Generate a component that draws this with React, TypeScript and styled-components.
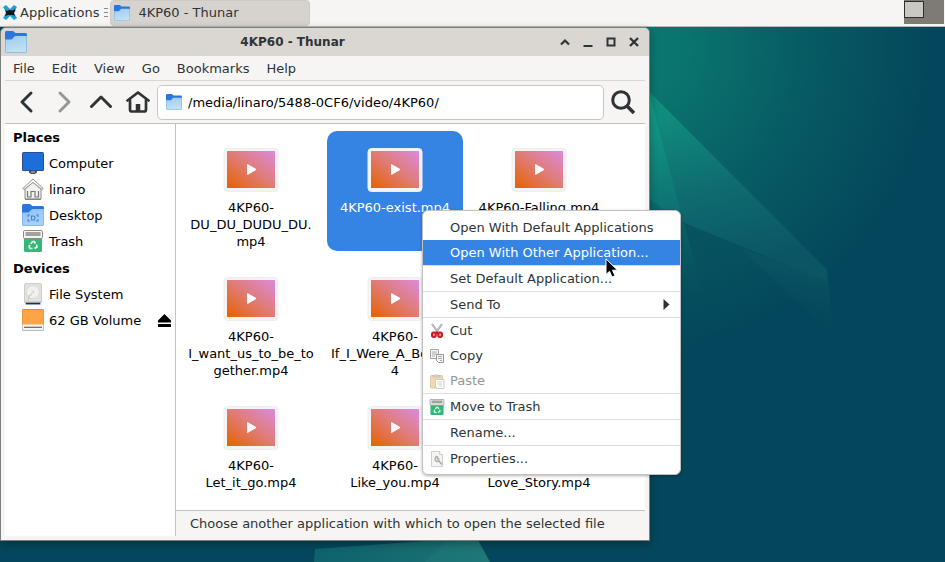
import React, { useId } from "react";
import styled, { createGlobalStyle, css } from "styled-components";

const GlobalStyle = createGlobalStyle`
  * { box-sizing: border-box; }
  html, body { margin: 0; padding: 0; }
  body, button, input {
    font-family: "DejaVu Sans", Verdana, sans-serif;
    font-size: 13px;
    line-height: 17px;
    color: #2e3436;
  }
  svg { display: block; flex: none; }
`;

const Screen = styled.div`
  position: relative;
  min-height: 100vh;
  display: flex;
  flex-direction: column;
  overflow: hidden;
`;

const PlainButton = styled.button`
  display: flex;
  align-items: center;
  justify-content: center;
  margin: 0;
  padding: 0;
  border: 0;
  background: none;
  text-align: left;
`;

const Panel = styled.header`
  display: flex;
  height: 27px;
  background: #f6f5f4;
  border-bottom: 1px solid #b4bab8;
`;

const ApplicationsButton = styled(PlainButton)`
  gap: 3px;
  padding: 0 5px 2px 3px;
`;

const PanelHandle = styled.div`
  display: flex;
  flex-direction: column;
  gap: 3px;
  padding: 8px 2px 0 0;
  i { width: 4px; height: 1px; background: #8c8c8a; }
`;

const TaskButton = styled(PlainButton)`
  flex: 0 1 200px;
  justify-content: flex-start;
  gap: 8px;
  padding: 0 3px 1px;
  background: #d6d2ce;
  border: 1px solid #cfcac5;
  border-radius: 4px;
`;

const Pager = styled.div`
  display: flex;
  width: 40px;
  height: 24px;
  margin: 0 1px 0 auto;
  background: #7e7a75;
`;

const PagerWindow = styled.div`
  width: 20px;
  height: 17px;
  margin-top: 1px;
  background: #c9c8c3;
  border: 1px solid #2e2e2c;
`;

const Desktop = styled.main`
  position: relative;
  flex: 1;
  display: flex;
  padding: 0 295px 21px 0;
  background: #04475c;
`;

const Wallpaper = styled.svg`
  position: absolute;
  inset: 0;
  width: 100%;
  height: 100%;
`;

const Window = styled.section`
  position: relative;
  flex: 1;
  min-width: 0;
  display: flex;
  flex-direction: column;
  background: #f6f5f4;
  border: 1px solid #7d7f7c;
  border-radius: 6px 6px 0 0;
  box-shadow: 0 3px 8px rgba(0, 0, 0, 0.3);
  overflow: hidden;
`;

const TitleBar = styled.div`
  display: flex;
  align-items: center;
  height: 28px;
  padding: 0 8px 0 4px;
  background: #dad6d2;
  h1 {
    flex: 1;
    margin: 0;
    font-size: 12px;
    line-height: 17px;
    text-align: center;
  }
`;

const WindowButtons = styled.div`
  display: flex;
  gap: 9px;
`;

const WindowButton = styled(PlainButton)`
  width: 14px;
  height: 20px;
`;

const MenuBar = styled.nav`
  display: flex;
  gap: 1px;
  height: 25px;
  margin: 0 4px;
  border-bottom: 1px solid #d9d6d3;
`;

const MenuBarItem = styled(PlainButton)`
  padding: 0 8px;
`;

const Toolbar = styled.div`
  display: flex;
  align-items: center;
  height: 42px;
  margin: 0 4px;
  padding: 0 4px 0 3px;
`;

const ToolButton = styled(PlainButton)`
  width: 37px;
  height: 36px;
`;

const PathField = styled.label`
  flex: 1;
  display: flex;
  align-items: center;
  gap: 6px;
  height: 35px;
  margin-left: 1px;
  padding: 0 8px;
  background: #fff;
  border: 1px solid #c9c4bf;
  border-radius: 5px;
  input {
    flex: 1;
    min-width: 0;
    padding: 0;
    border: 0;
    outline: 0;
    background: none;
    color: #000;
  }
`;

const Body = styled.div`
  flex: 1;
  display: flex;
  margin: 0 4px 4px;
  border-top: 1px solid #c6c1bc;
`;

const Sidebar = styled.aside`
  width: 171px;
  background: #fff;
  border-right: 1px solid #c6c1bc;
  color: #000;
  h2 {
    margin: 0;
    padding: 5px 8px 4px;
    font-size: 13px;
    line-height: 17px;
  }
  ul { margin: 0 0 1px; padding: 0; list-style: none; }
`;

const Place = styled.li`
  display: flex;
  align-items: center;
  height: 26px;
  padding: 0 4px 0 17px;
  a {
    flex: 1;
    display: flex;
    align-items: center;
    gap: 5px;
    color: #000;
    text-decoration: none;
  }
`;

const Content = styled.div`
  flex: 1;
  min-width: 0;
  display: flex;
  flex-direction: column;
`;

const FileGrid = styled.div`
  flex: 1;
  display: grid;
  grid-template-columns: repeat(auto-fill, 136px);
  grid-auto-rows: 120px;
  align-content: start;
  gap: 9px 8px;
  padding: 7px 7px 0;
  background: #fff;
`;

const FileCell = styled.button<{ $selected?: boolean }>`
  display: flex;
  flex-direction: column;
  align-items: center;
  gap: 7px;
  margin: 0;
  padding: 17px 0 0;
  border: 0;
  border-radius: 10px;
  background: ${(p) => (p.$selected ? "#3584e4" : "transparent")};
  color: ${(p) => (p.$selected ? "#fff" : "#000")};
  white-space: pre;
`;

const StatusBar = styled.footer`
  height: 26px;
  padding: 4px 14px;
  border-top: 1px solid #c6c1bc;
`;

const ContextMenu = styled.div`
  position: absolute;
  top: 210px;
  left: 422px;
  width: 259px;
  padding: 4px 0 3px;
  background: #fff;
  border: 1px solid #c4c2c0;
  border-radius: 6px;
  box-shadow: 0 1px 3px rgba(0, 0, 0, 0.3);
  hr { height: 1px; margin: 0; border: 0; background: #dfdedc; }
`;

const MenuItem = styled.button<{ $active?: boolean }>`
  display: flex;
  align-items: center;
  width: 100%;
  height: 25px;
  margin: 0;
  padding: 0 8px 0 6px;
  border: 0;
  background: none;
  text-align: left;
  span { flex: 1; }
  &:disabled { color: #949796; }
  ${(p) => p.$active && css`background: #3584e4; color: #fff;`}
`;

const MenuIcon = styled.div`
  width: 21px;
`;

const Pointer = styled.svg`
  position: absolute;
  top: 258px;
  left: 605px;
`;

const FolderIcon = ({ size, desktop }: { size: number; desktop?: boolean }) => {
  const id = useId();
  return (
    <svg width={size} height={size} viewBox="0 0 22 22">
      <defs>
        <linearGradient id={id} x1="0" y1="0" x2="0.3" y2="1">
          <stop offset="0" stopColor={desktop ? "#8fc2f8" : "#9bc9f3"} />
          <stop offset="1" stopColor={desktop ? "#a9d2fb" : "#c3e2f1"} />
        </linearGradient>
      </defs>
      <path d="M0 1.500Q0 0 1.500 0H8l2.500 2H20.500Q22 2 22 3.500V12H0z" fill="#2a76dc" />
      <path d="M0 8.500H6.500L10 5H22V20Q22 22 20 22H2Q0 22 0 20z" fill={`url(#${id})`} />
      <path d="M.4 9V20Q.4 21.600 2 21.600H20Q21.600 21.600 21.600 20V5.400" fill="none" stroke="#77addf" strokeWidth=".8" />
      {desktop && (
        <g fill="none" stroke="#3f86d8" strokeWidth="1.100">
          <path d="M8 11H6v2M6 15v2h2M14 11h2v2M16 15v2h-2" />
          <path d="M9.500 12H11Q13 12 13 14T11 16H9.500z" />
        </g>
      )}
    </svg>
  );
};

const XfceIcon = () => (
  <svg width="14" height="15" viewBox="0 0 14 15">
    <path d="M0 2L3 0 7 4 11 0 14 2 10.500 7.500 14 13 11 15 7 11 3 15 0 13 3.500 7.500z" fill="#1d9fd8" />
    <path d="M2 5l2 1 2-1 4 .5L12 4l.5 1.500L11 8l1 3-2-1H5L2 11l1-3z" fill="#10181b" />
  </svg>
);

const HouseIcon = () => (
  <svg width="24" height="22" viewBox="0 0 24 22" fill="none" stroke="#2e3436" strokeWidth="2.700" strokeLinejoin="round" strokeLinecap="round">
    <path d="M1.500 9.500L12 1.500 22.500 9.500" />
    <path d="M4 9V18.500Q4 20.500 6 20.500H18Q20 20.500 20 18.500V9" />
    <path d="M12 20V13" strokeWidth="4.500" strokeLinecap="butt" />
  </svg>
);

const Chevron = ({ d, color = "#2e3436" }: { d: string; color?: string }) => (
  <svg width="22" height="22" viewBox="0 0 22 22" fill="none" stroke={color} strokeWidth="2.900" strokeLinecap="round" strokeLinejoin="round">
    <path d={d} />
  </svg>
);

const ComputerIcon = () => (
  <svg width="22" height="22" viewBox="0 0 22 22">
    <path d="M7 18h8v2.500l-2 1.500H9l-2-1.500z" fill="#4a4d5c" />
    <rect width="22" height="19" rx="1.500" fill="#2b4f8e" />
    <rect x="1" y="1" width="20" height="17" rx=".5" fill="#1c6fdb" />
    <path d="M9 20h4" stroke="#c9ccd4" />
  </svg>
);

const HomePlaceIcon = () => (
  <svg width="22" height="22" viewBox="0 0 22 22">
    <path d="M3 11L11 4l8 7v10H3z" fill="#f1f1ef" stroke="#8a8a87" />
    <path d="M.7 10.500L11 1 21.300 10.500 20 11.500 11 4.500 2 11.500z" fill="#fafaf9" stroke="#8a8a87" strokeWidth=".9" />
    <path d="M5.500 13v6h3.500v-5.500h4V19h3.500v-6" fill="none" stroke="#777774" strokeWidth="1.200" />
    <path d="M3 21.300h16" stroke="#777774" />
  </svg>
);

const TrashIcon = ({ size }: { size: number }) => (
  <svg width={size} height={size} viewBox="0 0 22 22">
    <path d="M2 6h18v14.500q0 1.500-1.500 1.500h-15Q2 22 2 20.500z" fill="#32b877" />
    <rect x="1.500" y=".5" width="19" height="8" rx="1.200" fill="#f6f5f4" stroke="#8c8b88" />
    <rect x="3.500" y="2" width="15" height="4" fill="#a3a19d" />
    <g fill="none" stroke="#eafff4" strokeWidth="1.700">
      <path d="M8.700 14L10.500 11.500h1.500l1.500 2" />
      <path d="M14.500 14.500L15 17l-2.500 1.500" />
      <path d="M10.500 18.500H8L7 16.500l1-1.500" />
    </g>
  </svg>
);

const DiskIcon = () => (
  <svg width="22" height="22" viewBox="0 0 22 22">
    <rect x="2.500" y=".5" width="17" height="20" rx="1.500" fill="#e3e2df" stroke="#cfcdca" />
    <path d="M3 18.500h16v2q0 1.500-1.500 1.500h-13Q3 22 3 20.500z" fill="#b9c0ca" />
    <path d="M4 20.500h14" stroke="#252c3c" strokeWidth="1.400" />
    <circle cx="11" cy="9" r="6.500" fill="#f2f1ef" stroke="#d3d2cf" strokeWidth=".7" />
    <circle cx="11" cy="9" r="1.700" fill="#dddcd9" />
    <path d="M6 17l1-4 3-2" fill="none" stroke="#cbc9c6" strokeWidth="1.200" />
  </svg>
);

const VolumeIcon = () => (
  <svg width="22" height="22" viewBox="0 0 22 22">
    <rect y="12" width="22" height="10" rx="1.500" fill="#bdbab7" />
    <path d="M.8 15h20.400v5q0 1-1 1H1.800q-1 0-1-1z" fill="#f6f5f4" />
    <path d="M0 1.500Q0 0 1.500 0h19Q22 0 22 1.500V15.500H0z" fill="#ffa348" />
    <path d="M0 1.500Q0 0 1.500 0h19Q22 0 22 1.500V15H21.500V1H.5V15H0z" fill="#dd8b3b" />
    <path d="M2 18.300h18" stroke="#55565c" strokeWidth="1.100" />
  </svg>
);

const EjectIcon = () => (
  <svg width="13" height="13" viewBox="0 0 13 13">
    <path d="M6.500 0L13 6.500V8.500H0V6.500zM0 10h13v3H0z" fill="#000" />
  </svg>
);

const VideoIcon = () => {
  const id = useId();
  return (
    <svg width="56" height="44" viewBox="0 0 56 44">
      <defs>
        <linearGradient id={id} x1="0" y1="1" x2="1" y2="0">
          <stop offset="0" stopColor="#e66100" />
          <stop offset=".5" stopColor="#e07b73" />
          <stop offset="1" stopColor="#dc8add" />
        </linearGradient>
      </defs>
      <rect x="1" y=".5" width="54" height="43" rx="3.500" fill="#f6f4f3" stroke="#efedeb" />
      <rect x="4" y="3" width="48" height="37" rx=".6" fill={`url(#${id})`} />
      <path d="M24.500 16.500L33 21.500 24.500 26.500z" fill="#fff" stroke="#fff" strokeLinejoin="round" />
    </svg>
  );
};

const ScissorsIcon = () => (
  <svg width="16" height="16" viewBox="0 0 16 16">
    <path d="M3 1l6.500 9M13 1L6.500 10" stroke="#969b98" strokeWidth="2" />
    <path d="M3 1l6 8M13 1L7 9" stroke="#d7dad8" strokeWidth=".8" />
    <rect x="3" y="9.500" width="3.800" height="4.500" rx="1.700" fill="#e8a0a4" stroke="#cb1a28" strokeWidth="2" />
    <rect x="9.200" y="9.500" width="3.800" height="4.500" rx="1.700" fill="#e8a0a4" stroke="#cb1a28" strokeWidth="2" />
    <path d="M7 11l1-2 1.500 2" fill="none" stroke="#cb1a28" strokeWidth="1.500" />
  </svg>
);

const CopyIcon = () => (
  <svg width="16" height="16" viewBox="0 0 16 16">
    <path d="M1.500 1.500h8v9h-8z" fill="#f7f7f6" stroke="#a1a19e" />
    <path d="M3 4h5M3 6h5M3 8h3" stroke="#aaa" />
    <path d="M7.500 6.500h7v8h-5l-2-2z" fill="#f7f7f6" stroke="#969693" />
    <path d="M9 8.500h4M9 10.500h4M11 12.500h2" stroke="#aaa" />
  </svg>
);

const PasteIcon = () => (
  <svg width="16" height="16" viewBox="0 0 16 16" opacity=".6">
    <rect x="1.500" y="2.500" width="12" height="12.500" rx="1" fill="#e8c37f" stroke="#c6a468" />
    <path d="M4 4V2.500h2L7.500 1 9 2.500h2V4z" fill="#b9bab6" stroke="#91928e" strokeWidth=".6" />
    <path d="M6.500 6.500h8.500v9h-6.500l-2-2z" fill="#fcfcfb" stroke="#a9a9a5" />
    <path d="M8.500 9h5M8.500 11h5M10 13h3" stroke="#b8b8b4" />
  </svg>
);

const PropertiesIcon = () => (
  <svg width="16" height="16" viewBox="0 0 16 16">
    <path d="M2.500.5h8l3 3v12h-11z" fill="#f5f5f4" stroke="#cfcfcc" />
    <path d="M10.500.5v3h3" fill="#fff" stroke="#cfcfcc" />
    <path d="M8.500 5.500a2.500 2.500 0 1 0 2 4" fill="none" stroke="#a9aaa7" strokeWidth="1.300" />
    <path d="M8.500 5.500v2.500h2M9.500 9.500l3.500 4" fill="none" stroke="#a9aaa7" strokeWidth="1.500" />
  </svg>
);

const files = [
  { name: "4KP60-\nDU_DU_DUDU_DU.\nmp4" },
  { name: "4KP60-exist.mp4", selected: true },
  { name: "4KP60-Falling.mp4" },
  { name: "4KP60-\nI_want_us_to_be_to\ngether.mp4" },
  { name: "4KP60-\nIf_I_Were_A_Boy.mp\n4" },
  { name: "4KP60-" },
  { name: "4KP60-\nLet_it_go.mp4" },
  { name: "4KP60-\nLike_you.mp4" },
  { name: "4KP60-\nLove_Story.mp4" },
];

const places = [
  { name: "Computer", icon: <ComputerIcon /> },
  { name: "linaro", icon: <HomePlaceIcon /> },
  { name: "Desktop", icon: <FolderIcon size={22} desktop /> },
  { name: "Trash", icon: <TrashIcon size={22} /> },
];

const Scene = () => (
  <Wallpaper viewBox="0 27 945 535" preserveAspectRatio="none" aria-hidden="true">
    <defs>
      <radialGradient id="glow" gradientUnits="userSpaceOnUse" cx="630" cy="50" r="300">
        <stop offset="0" stopColor="#0b7870" />
        <stop offset=".2" stopColor="#0a736d" />
        <stop offset=".6" stopColor="#075a63" />
        <stop offset="1" stopColor="#04475c" />
      </radialGradient>
      <linearGradient id="beam" gradientUnits="userSpaceOnUse" x1="690" y1="110" x2="730" y2="270">
        <stop offset="0" stopColor="#0f8c7c" />
        <stop offset=".5" stopColor="#0f6b6f" />
        <stop offset="1" stopColor="#0b5565" />
      </linearGradient>
      <linearGradient id="fold" gradientUnits="userSpaceOnUse" x1="660" y1="210" x2="700" y2="350">
        <stop offset="0" stopColor="#07555f" />
        <stop offset="1" stopColor="#04475c" stopOpacity="0" />
      </linearGradient>
      <linearGradient id="edge" gradientUnits="userSpaceOnUse" x1="650" y1="90" x2="670" y2="300">
        <stop offset="0" stopColor="#14a289" />
        <stop offset="1" stopColor="#0a5f69" stopOpacity="0" />
      </linearGradient>
      <linearGradient id="tail" gradientUnits="userSpaceOnUse" x1="815" y1="270" x2="800" y2="335">
        <stop offset="0" stopColor="#0b5363" />
        <stop offset="1" stopColor="#04475c" stopOpacity="0" />
      </linearGradient>
      <linearGradient id="floor" gradientUnits="userSpaceOnUse" x1="315" y1="550" x2="490" y2="550">
        <stop offset="0" stopColor="#0e626c" />
        <stop offset="1" stopColor="#1c7375" />
      </linearGradient>
    </defs>
    <path d="M0 27h945v535H0z" fill="#04475c" />
    <path d="M500 27h445v400H500z" fill="url(#glow)" />
    <path d="M645 87L827 270 833 340 645 400z" fill="url(#fold)" />
    <path d="M645 87L827 270 828 282 685 223 650 200z" fill="url(#beam)" />
    <path d="M648 90L702 290 650 330z" fill="url(#edge)" />
    <path d="M740 248L828 280 834 336z" fill="url(#tail)" />
    <path d="M315 549L440 540H478L490 562H314z" fill="url(#floor)" />
    <path d="M446 541H478L490 562H425z" fill="#2b8580" opacity=".25" />
  </Wallpaper>
);

export default function App() {
  return (
    <>
      <GlobalStyle />
      <Screen>
        <Panel>
          <ApplicationsButton><XfceIcon />Applications</ApplicationsButton>
          <PanelHandle><i /><i /><i /></PanelHandle>
          <TaskButton><FolderIcon size={16} />4KP60 - Thunar</TaskButton>
          <Pager><PagerWindow /></Pager>
        </Panel>
        <Desktop>
          <Scene />
          <Window>
            <TitleBar>
              <FolderIcon size={22} />
              <h1>4KP60 - Thunar</h1>
              <WindowButtons>
                <WindowButton aria-label="Roll up">
                  <svg width="10" height="10" viewBox="0 0 10 10"><path d="M1 7.500L5 3.500 9 7.500" fill="none" stroke="#2e3436" strokeWidth="2.200" /></svg>
                </WindowButton>
                <WindowButton aria-label="Minimize">
                  <svg width="10" height="10" viewBox="0 0 10 10"><path d="M.5 8h9v2h-9z" fill="#2e3436" /></svg>
                </WindowButton>
                <WindowButton aria-label="Maximize">
                  <svg width="10" height="10" viewBox="0 0 10 10"><path d="M1.500 1.500h7v7h-7z" fill="none" stroke="#2e3436" strokeWidth="2" /></svg>
                </WindowButton>
                <WindowButton aria-label="Close">
                  <svg width="10" height="10" viewBox="0 0 10 10"><path d="M1 1l8 8M9 1L1 9" stroke="#2e3436" strokeWidth="2.300" /></svg>
                </WindowButton>
              </WindowButtons>
            </TitleBar>
            <MenuBar>
              {["File", "Edit", "View", "Go", "Bookmarks", "Help"].map((m) => (
                <MenuBarItem key={m}>{m}</MenuBarItem>
              ))}
            </MenuBar>
            <Toolbar>
              <ToolButton aria-label="Back"><Chevron d="M15 2L6 11 15 20" /></ToolButton>
              <ToolButton aria-label="Forward"><Chevron d="M7 2L16 11 7 20" color="#949796" /></ToolButton>
              <ToolButton aria-label="Parent folder"><Chevron d="M1.500 15.500L11 6 20.500 15.500" /></ToolButton>
              <ToolButton aria-label="Home"><HouseIcon /></ToolButton>
              <PathField>
                <FolderIcon size={16} />
                <input aria-label="Location" defaultValue="/media/linaro/5488-0CF6/video/4KP60/" />
              </PathField>
              <ToolButton aria-label="Search">
                <svg width="24" height="24" viewBox="0 0 24 24" fill="none" stroke="#2e3436" strokeWidth="3">
                  <circle cx="10" cy="10" r="8.300" />
                  <path d="M15.500 15.500L23 23" strokeWidth="3.600" />
                </svg>
              </ToolButton>
            </Toolbar>
            <Body>
              <Sidebar>
                <h2>Places</h2>
                <ul>
                  {places.map((p) => (
                    <Place key={p.name}><a href="#">{p.icon}{p.name}</a></Place>
                  ))}
                </ul>
                <h2>Devices</h2>
                <ul>
                  <Place><a href="#"><DiskIcon />File System</a></Place>
                  <Place>
                    <a href="#"><VolumeIcon />62 GB Volume</a>
                    <PlainButton aria-label="Eject"><EjectIcon /></PlainButton>
                  </Place>
                </ul>
              </Sidebar>
              <Content>
                <FileGrid>
                  {files.map((f) => (
                    <FileCell key={f.name} $selected={f.selected}>
                      <VideoIcon />
                      {f.name}
                    </FileCell>
                  ))}
                </FileGrid>
                <StatusBar>Choose another application with which to open the selected file</StatusBar>
              </Content>
            </Body>
          </Window>
        </Desktop>
        <ContextMenu role="menu">
          <MenuItem role="menuitem"><MenuIcon /><span>Open With Default Applications</span></MenuItem>
          <MenuItem role="menuitem" $active><MenuIcon /><span>Open With Other Application...</span></MenuItem>
          <hr />
          <MenuItem role="menuitem"><MenuIcon /><span>Set Default Application...</span></MenuItem>
          <hr />
          <MenuItem role="menuitem">
            <MenuIcon /><span>Send To</span>
            <svg width="10" height="11" viewBox="0 0 10 11"><path d="M1.500 0L7.500 5.500 1.500 11z" fill="#2e3436" /></svg>
          </MenuItem>
          <hr />
          <MenuItem role="menuitem"><MenuIcon><ScissorsIcon /></MenuIcon><span>Cut</span></MenuItem>
          <MenuItem role="menuitem"><MenuIcon><CopyIcon /></MenuIcon><span>Copy</span></MenuItem>
          <MenuItem role="menuitem" disabled><MenuIcon><PasteIcon /></MenuIcon><span>Paste</span></MenuItem>
          <hr />
          <MenuItem role="menuitem"><MenuIcon><TrashIcon size={16} /></MenuIcon><span>Move to Trash</span></MenuItem>
          <hr />
          <MenuItem role="menuitem"><MenuIcon /><span>Rename...</span></MenuItem>
          <hr />
          <MenuItem role="menuitem"><MenuIcon><PropertiesIcon /></MenuIcon><span>Properties...</span></MenuItem>
        </ContextMenu>
        <Pointer width="14" height="20" viewBox="0 0 14 20">
          <path d="M1 .8V16.500L4.500 13.300 7 19 10 17.700 7.500 12.200H12.500z" fill="#000" stroke="#fff" strokeWidth="1" />
        </Pointer>
      </Screen>
    </>
  );
}
